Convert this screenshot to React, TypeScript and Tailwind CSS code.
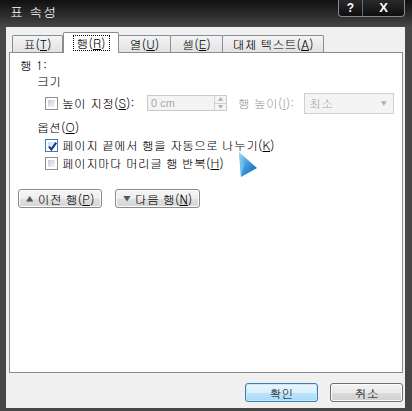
import React from "react";

const F = "font-['Gulim','Noto_Sans_CJK_KR',sans-serif]";

function U({ c }: { c: string }) {
  return <span className="underline decoration-1 underline-offset-[1px]">{c}</span>;
}

function Check({ checked }: { checked?: boolean }) {
  return (
    <span
      className={
        checked
          ? "relative flex w-[13px] h-[13px] shrink-0 border border-[#3c7fb1] bg-white p-[2px]"
          : "relative flex w-[13px] h-[13px] shrink-0 border border-[#8e8f8f] bg-white p-[2px]"
      }
    >
      <span
        className={
          checked
            ? "flex-1 bg-[linear-gradient(135deg,#c3def5,#eef7fd)]"
            : "flex-1 bg-[linear-gradient(135deg,#c9ccd1,#f7f7f7)]"
        }
      />
      {checked && (
        <svg className="absolute left-[1px] top-[1px]" width="11" height="11" viewBox="0 0 11 11">
          <path d="M2 5.5 L4.3 8.6 L9.2 1.6" stroke="#1e2f8a" strokeWidth="2" fill="none" />
        </svg>
      )}
    </span>
  );
}

function Tab({ children, w, selected }: { children: React.ReactNode; w: string; selected?: boolean }) {
  if (selected) {
    return (
      <div
        className={`${w} relative z-10 -mb-px h-[21px] shrink-0 rounded-t-[2px] border border-b-0 border-[#898c95] bg-white flex items-start justify-center pt-[2px]`}
      >
        <span className="border border-dotted border-black px-[3px] leading-[14px] h-[16px]">{children}</span>
      </div>
    );
  }
  return (
    <div
      className={`${w} h-[17px] shrink-0 rounded-t-[2px] border border-b-0 border-[#898c95] bg-[linear-gradient(to_bottom,#f4f4f4,#e2e2e2)] flex items-center justify-center leading-[16px] -ml-px first:ml-0`}
    >
      {children}
    </div>
  );
}

function Btn({ children, w, def }: { children: React.ReactNode; w: string; def?: boolean }) {
  return (
    <div
      className={
        def
          ? `${w} h-[19px] rounded-[3px] border border-[#3c7fb1] bg-[linear-gradient(to_bottom,#eaf6fd_0%,#d9f0fc_50%,#bee6fd_50%,#a7d9f5_100%)] flex items-center justify-center leading-none shadow-[inset_0_0_0_1px_#c9e7f9]`
          : `${w} h-[19px] rounded-[3px] border border-[#707070] bg-[linear-gradient(to_bottom,#f2f2f2_0%,#ebebeb_50%,#dddddd_50%,#cfcfcf_100%)] flex items-center justify-center leading-none shadow-[inset_0_0_0_1px_#fcfcfc]`
      }
    >
      {children}
    </div>
  );
}

export default function App() {
  return (
    <div className={`${F} relative w-[412px] h-[411px] flex flex-col bg-[#474747] text-[12px] text-black overflow-hidden`}>
      {/* title bar */}
      <div className="h-[27px] shrink-0 flex items-start justify-between bg-[linear-gradient(to_bottom,#101010,#2e2e2e_60%,#474747)]">
        <div className="pl-[10px] pt-[4px] text-white text-[13px] leading-[16px] tracking-[1px]">표 속성</div>
        <div className="mr-[7px] flex h-[17px] rounded-b-[4px] border border-t-0 border-[#8a8a8a] bg-[linear-gradient(to_bottom,#2a2a2a,#0e0e0e)] overflow-hidden">
          <div className="w-[24px] flex items-center justify-center text-white text-[12px] font-bold border-r border-[#6a6a6a] font-['Liberation_Sans',sans-serif]">?</div>
          <div className="w-[41px] flex items-center justify-center text-white text-[13px] font-bold font-['Liberation_Sans',sans-serif]">X</div>
        </div>
      </div>
      {/* body */}
      <div className="flex-1 ml-[6px] mr-[7px] mb-[3px] bg-[#f0f0f0] flex flex-col pl-[3px] pr-[0px] pt-[5px]">
        <div className="h-[20px] flex items-end pl-[3px]">
          <Tab w="w-[51px]">
            <span>
              표(<U c="T" />)
            </span>
          </Tab>
          <Tab w="w-[56px]" selected>
            <span>
              행(<U c="R" />)
            </span>
          </Tab>
          <Tab w="w-[53px]">
            <span>
              열(<U c="U" />)
            </span>
          </Tab>
          <Tab w="w-[53px]">
            <span>
              셀(<U c="E" />)
            </span>
          </Tab>
          <Tab w="w-[102px]">
            <span>
              대체 텍스트(<U c="A" />)
            </span>
          </Tab>
        </div>
        <div className="h-[321px] w-[394px] border border-[#898c95] bg-white flex flex-col pl-[10px] pt-[4px]">
          <div className="h-[16px] leading-[16px]">행 1:</div>
          <div className="h-[16px] leading-[16px] pl-[17px]">크기</div>
          <div className="mt-[3px] h-[22px] flex items-center pl-[25px]">
            <Check />
            <span className="ml-[4px] w-[85px]">
              높이 지정(<U c="S" />):
            </span>
            <div className="w-[80px] h-[16px] border border-[#c9c9c9] bg-[#f4f4f4] flex">
              <span className="flex-1 pl-[3px] leading-[14px] text-[#a8a8a8] font-['Liberation_Sans',sans-serif] text-[11px]">0 cm</span>
              <div className="w-[12px] flex flex-col border-l border-[#d2d2d2]">
                <div className="flex-1 flex items-center justify-center border-b border-[#d2d2d2] text-[#b0b0b0] text-[6px] leading-none">▲</div>
                <div className="flex-1 flex items-center justify-center text-[#b0b0b0] text-[6px] leading-none">▼</div>
              </div>
            </div>
            <span className="ml-[11px] w-[66px] text-[#a0a0a0]">
              행 높이(<U c="I" />):
            </span>
            <div className="w-[90px] h-[21px] border border-[#cfcfcf] bg-[#f4f4f4] flex items-center pl-[4px] pr-[6px] justify-between">
              <span className="text-[#a8a8a8]">최소</span>
              <span className="text-[#b0b0b0] text-[7px]">▼</span>
            </div>
          </div>
          <div className="mt-[5px] h-[16px] leading-[16px] pl-[17px]">
            옵션(<U c="O" />)
          </div>
          <div className="mt-[2px] h-[16px] flex items-center pl-[25px]">
            <Check checked />
            <span className="ml-[4px] leading-[16px]">
              페이지 끝에서 행을 자동으로 나누기(<U c="K" />)
            </span>
          </div>
          <div className="mt-[2px] h-[16px] flex items-center pl-[25px]">
            <Check />
            <span className="ml-[4px] leading-[16px]">
              페이지마다 머리글 행 반복(<U c="H" />)
            </span>
          </div>
          <div className="mt-[18px] flex gap-[13px] -ml-[2px]">
            <div className="w-[84px] h-[19px] rounded-[3px] border border-[#8a8a8a] bg-[linear-gradient(to_bottom,#f6f6f6_0%,#ededed_50%,#e0e0e0_50%,#d6d6d6_100%)] flex items-center justify-center gap-[4px] leading-none shadow-[inset_0_0_0_1px_#fcfcfc]">
              <span className="text-[9px] text-[#555]">▲</span>
              <span>
                이전 행(<U c="P" />)
              </span>
            </div>
            <div className="w-[85px] h-[19px] rounded-[3px] border border-[#8a8a8a] bg-[linear-gradient(to_bottom,#f6f6f6_0%,#ededed_50%,#e0e0e0_50%,#d6d6d6_100%)] flex items-center justify-center gap-[4px] leading-none shadow-[inset_0_0_0_1px_#fcfcfc]">
              <span className="text-[9px] text-[#555]">▼</span>
              <span>
                다음 행(<U c="N" />)
              </span>
            </div>
          </div>
        </div>
        <div className="mt-[10px] flex justify-end gap-[12px] pr-[2px]">
          <Btn w="w-[73px]" def>
            확인
          </Btn>
          <Btn w="w-[73px]">취소</Btn>
        </div>
      </div>
      {/* mouse cursor */}
      <svg className="absolute left-[236px] top-[150px]" width="24" height="30" viewBox="0 0 24 30">
        <defs>
          <linearGradient id="cg" x1="0" y1="0" x2="1" y2="1">
            <stop offset="0" stopColor="#a9dcf7" />
            <stop offset="0.5" stopColor="#3a98dc" />
            <stop offset="1" stopColor="#1360b0" />
          </linearGradient>
        </defs>
        <polygon points="3,2 21,18 5,27" fill="url(#cg)" />
        <polygon points="3,2 8,15 5,27" fill="#7cc4ef" opacity="0.7" />
      </svg>
    </div>
  );
}
